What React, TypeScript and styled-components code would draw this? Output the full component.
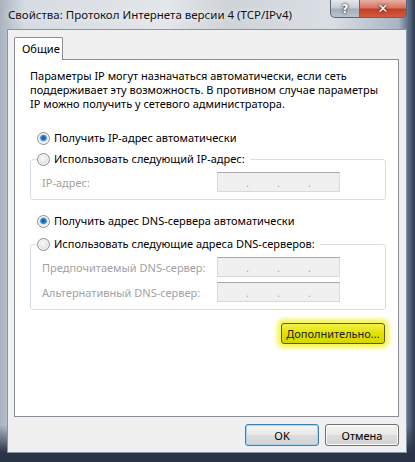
import React from "react";
import styled, { createGlobalStyle } from "styled-components";

const GlobalStyle = createGlobalStyle`
  html, body {
    margin: 0;
    padding: 0;
    background: #1d2535;
  }
  body {
    font-family: "Noto Sans", "Open Sans", sans-serif;
    font-size: 11px;
    color: #000;
  }
`;

const Window = styled.div`
  width: 415px;
  height: 462px;
  box-sizing: border-box;
  display: flex;
  flex-direction: column;
  background:
    linear-gradient(to bottom, rgba(255, 255, 255, 0) 92%, #2a3446 98%),
    linear-gradient(
      to right,
      #aab4c0 0%,
      #d6dbe2 6%,
      #e3e6ea 40%,
      #cfd3d8 55%,
      #dadfe5 80%,
      #a9b5c4 96%,
      #4c5b73 99%,
      #2f3b50 100%
    );
`;

const TitleBar = styled.div`
  height: 29px;
  display: flex;
  align-items: flex-start;
  padding-left: 8px;
`;

const Title = styled.span`
  margin-top: 7px;
  font-size: 11.5px;
  line-height: 16px;
  color: #111;
  text-shadow: 0 0 6px rgba(255, 255, 255, 0.9);
`;

const Caption = styled.div`
  margin-left: auto;
  margin-right: 8px;
  display: flex;
`;

const CaptionButton = styled.div<{ $close?: boolean }>`
  width: ${(p) => (p.$close ? 47 : 30)}px;
  height: 18px;
  box-sizing: border-box;
  border: 1px solid #5a6576;
  border-top: none;
  border-left: ${(p) => (p.$close ? "none" : "1px solid #5a6576")};
  border-radius: ${(p) => (p.$close ? "0 0 5px 0" : "0 0 0 5px")};
  display: flex;
  align-items: center;
  justify-content: center;
  color: #fff;
  font-family: "DejaVu Sans", sans-serif;
  font-weight: bold;
  font-size: ${(p) => (p.$close ? 13 : 12)}px;
  text-shadow: 0 0 3px #333, 0 0 1px #000;
  background: ${(p) =>
    p.$close
      ? "linear-gradient(to bottom, #e8b0a2 0%, #d8735e 45%, #c2412b 55%, #d45a3c 100%)"
      : "linear-gradient(to bottom, #e5e8ec 0%, #c5ccd4 45%, #a5afbb 55%, #b9c2cc 100%)"};
`;

const Client = styled.div`
  margin: 0 8px 0 7px;
  height: 424px;
  box-sizing: border-box;
  background: #f0f0f0;
  border: 1px solid #8696a8;
  padding: 7px 7px 0 6px;
  display: flex;
  flex-direction: column;
`;

const TabStrip = styled.div`
  display: flex;
  height: 22px;
  position: relative;
  z-index: 1;
`;

const Tab = styled.div`
  width: 49px;
  height: 23px;
  box-sizing: border-box;
  background: #fff;
  border: 1px solid #898c95;
  border-bottom: none;
  border-radius: 2px 2px 0 0;
  padding: 3px 0 0 7px;
  line-height: 16px;
`;

const Panel = styled.div`
  height: 358px;
  box-sizing: border-box;
  background: #fff;
  border: 1px solid #898c95;
  padding: 9px 12px 0 15px;
  display: flex;
  flex-direction: column;
`;

const Intro = styled.p`
  margin: 0;
  line-height: 14px;
  white-space: nowrap;
`;

const RadioRow = styled.label<{ $top?: number; $indent?: number }>`
  display: flex;
  align-items: center;
  height: 16px;
  margin-top: ${(p) => p.$top ?? 0}px;
  padding-left: ${(p) => p.$indent ?? 7}px;
  gap: 4px;
  line-height: 16px;
  white-space: nowrap;
`;

const Radio = styled.span<{ $checked?: boolean }>`
  width: 13px;
  height: 13px;
  box-sizing: border-box;
  border-radius: 50%;
  border: 1px solid #8e8f8f;
  flex-shrink: 0;
  background: ${(p) =>
    p.$checked
      ? "radial-gradient(circle at 50% 45%, #1f4f8f 0%, #2c72c7 25%, #64a8e8 38%, #d8e6f2 45%, #f4f4f4 70%)"
      : "radial-gradient(circle at 45% 40%, #fbfbfb 0%, #e4e4e4 55%, #c8c8c8 100%)"};
  box-shadow: inset 0 0 0 1px #f6f6f6;
`;

const Group = styled.fieldset<{ $top?: number }>`
  margin: ${(p) => p.$top ?? 0}px 0 0 0;
  border: 1px solid #d5dfe5;
  border-radius: 3px;
  padding: 0 15px 7px 6px;
  display: flex;
  flex-direction: column;
  gap: 5px;
`;

const Legend = styled.legend`
  margin: 0;
  padding: 0 5px 0 0;
  display: flex;
`;

const Field = styled.div<{ $top?: number }>`
  display: grid;
  grid-template-columns: 175px 123px;
  align-items: center;
  height: 20px;
  margin-top: ${(p) => p.$top ?? 0}px;
  padding-left: 5px;
`;

const FieldLabel = styled.span`
  color: #a2a2a2;
  white-space: nowrap;
`;

const IpBox = styled.div`
  width: 123px;
  height: 20px;
  box-sizing: border-box;
  background: #f0f0f0;
  border: 1px solid #d9d9d9;
  border-top-color: #a9a9a9;
  display: flex;
  align-items: center;
  justify-content: space-evenly;
  color: #a8a8a8;
  font-size: 11px;
  line-height: 11px;
`;

const ButtonRow = styled.div<{ $top?: number }>`
  display: flex;
  justify-content: flex-end;
  gap: 6px;
  margin-top: ${(p) => p.$top ?? 0}px;
`;

const HighlightButton = styled.button`
  width: 104px;
  height: 21px;
  margin-right: 1px;
  border: 1px solid #5c5c18;
  border-radius: 3px;
  background: linear-gradient(to bottom, #f2f24a 0%, #e2e200 50%, #d6d600 100%);
  box-shadow: 0 0 4px 4px rgba(244, 244, 40, 0.8);
  font-family: inherit;
  font-size: 11px;
  color: #222;
  padding: 0;
`;

const DialogButton = styled.button<{ $default?: boolean }>`
  width: 74px;
  height: 22px;
  border: 1px solid ${(p) => (p.$default ? "#3c7fb1" : "#707070")};
  border-radius: 3px;
  background: linear-gradient(to bottom, #f6f6f6 0%, #e8e8e8 48%, #dcdcdc 52%, #d2d2d2 100%);
  box-shadow: inset 0 0 0 1px ${(p) => (p.$default ? "#a8d6f2" : "#fbfbfb")};
  font-family: inherit;
  font-size: 11px;
  color: #000;
  padding: 0;
`;

const Footer = styled.div`
  display: flex;
  justify-content: flex-end;
  gap: 6px;
  margin-top: 7px;
`;

const Dots = () => (
  <IpBox>
    <span>.</span>
    <span>.</span>
    <span>.</span>
  </IpBox>
);

export default function App() {
  return (
    <>
      <GlobalStyle />
      <Window>
        <TitleBar>
          <Title>Свойства: Протокол Интернета версии 4 (TCP/IPv4)</Title>
          <Caption>
            <CaptionButton>?</CaptionButton>
            <CaptionButton $close>✕</CaptionButton>
          </Caption>
        </TitleBar>
        <Client>
          <TabStrip>
            <Tab>Общие</Tab>
          </TabStrip>
          <Panel>
            <Intro>
              Параметры IP могут назначаться автоматически, если сеть
              <br />
              поддерживает эту возможность. В противном случае параметры
              <br />
              IP можно получить у сетевого администратора.
            </Intro>
            <RadioRow $top={19}>
              <Radio $checked />
              Получить IP-адрес автоматически
            </RadioRow>
            <Group $top={5}>
              <Legend>
                <RadioRow $indent={0}>
                  <Radio />
                  Использовать следующий IP-адрес:
                </RadioRow>
              </Legend>
              <Field $top={5}>
                <FieldLabel>IP-адрес:</FieldLabel>
                <Dots />
              </Field>
            </Group>
            <RadioRow $top={13}>
              <Radio $checked />
              Получить адрес DNS-сервера автоматически
            </RadioRow>
            <Group $top={7}>
              <Legend>
                <RadioRow $indent={0}>
                  <Radio />
                  Использовать следующие адреса DNS-серверов:
                </RadioRow>
              </Legend>
              <Field $top={5}>
                <FieldLabel>Предпочитаемый DNS-сервер:</FieldLabel>
                <Dots />
              </Field>
              <Field>
                <FieldLabel>Альтернативный DNS-сервер:</FieldLabel>
                <Dots />
              </Field>
            </Group>
            <ButtonRow $top={13}>
              <HighlightButton>Дополнительно...</HighlightButton>
            </ButtonRow>
          </Panel>
          <Footer>
            <DialogButton $default>OK</DialogButton>
            <DialogButton>Отмена</DialogButton>
          </Footer>
        </Client>
      </Window>
    </>
  );
}
